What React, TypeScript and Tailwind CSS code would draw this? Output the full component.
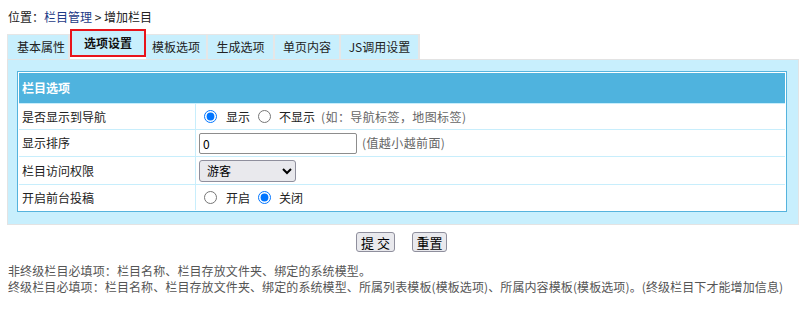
import { useState } from 'react';

const tabs = [
    { label: '基本属性', w: 'w-[63px] pl-[6px]' },
    { label: '选项设置', w: 'w-[76px]' },
    { label: '模板选项', w: 'w-[62px]' },
    { label: '生成选项', w: 'w-[67px]' },
    { label: '单页内容', w: 'w-[66px]' },
    { label: 'JS调用设置', w: 'w-[79px]' },
];

const Row = ({ label, children, h }: { label: string; children: React.ReactNode; h: string }) => (
    <div className={`flex ${h} border-t border-[#c8eefc]`}>
        <div className="w-[177px] shrink-0 flex items-center pl-[3px] border-r border-[#c8eefc]">{label}</div>
        <div className="flex-1 flex items-center pl-[3px]">{children}</div>
    </div>
);

export default function App() {
    const [active] = useState(1);
    const [showNav, setShowNav] = useState(true);
    const [allowPost, setAllowPost] = useState(false);
    const [order, setOrder] = useState('0');

    return (
        <div
            className="w-[801px] h-[324px] bg-white text-[12px] leading-[16px] text-[#222] overflow-hidden"
            style={{ fontFamily: '"Noto Sans CJK SC", "Noto Sans", sans-serif' }}
        >
            {/* 位置 */}
            <div className="pl-[8px] pt-[9px] h-[29px]">
                位置：<span className="text-[#1d3a86]">栏目管理</span> &gt; 增加栏目
            </div>

            {/* Tabs */}
            <div className="flex items-end pl-[7px] h-[30px]">
                {tabs.map((t, i) =>
                    i === active ? (
                        <div
                            key={t.label}
                            className={`${t.w} h-[28px] mb-[2px] flex items-center justify-center bg-[#c8effd] border-2 border-[#e8141b] font-bold text-[#111]`}
                        >
                            {t.label}
                        </div>
                    ) : (
                        <div
                            key={t.label}
                            className={`${t.w} h-[25px] flex items-center justify-center bg-[#c8effd] border-r-2 border-r-[#e6e6e6] border-t border-t-[#e6e6e6] ${i === 0 ? 'border-l border-l-[#e6e6e6]' : ''}`}
                        >
                            {t.label}
                        </div>
                    )
                )}
            </div>

            {/* Panel */}
            <div className="ml-[7px] mr-[2px] bg-[#c8effd] border border-[#e3e3e3] pt-[11px] pb-[12px] pl-[9px] pr-[11px]">
                <div className="border border-[#55b3dd] p-px bg-white">
                    <div className="h-[30px] bg-[#4fb3de] text-white font-bold flex items-center pl-[3px]">栏目选项</div>
                    <Row label="是否显示到导航" h="h-[26px]">
                        <label className="flex items-center">
                            <input
                                type="radio"
                                name="nav"
                                checked={showNav}
                                onChange={() => setShowNav(true)}
                                className="ml-[5px] mr-[9px]"
                            />
                            显示
                        </label>
                        <label className="flex items-center">
                            <input
                                type="radio"
                                name="nav"
                                checked={!showNav}
                                onChange={() => setShowNav(false)}
                                className="ml-[8px] mr-[8px]"
                            />
                            不显示
                        </label>
                        <span className="ml-[6px] text-[#666] tracking-[0.4px]">(如：导航标签，地图标签)</span>
                    </Row>
                    <Row label="显示排序" h="h-[27px]">
                        <input
                            type="text"
                            value={order}
                            onChange={(e) => setOrder(e.target.value)}
                            className="w-[158px] h-[21px] border border-[#8d8d8d] rounded-[2px] px-[3px] text-[12px] text-black"
                        />
                        <span className="ml-[5px] text-[#666] tracking-[0.4px]">(值越小越前面)</span>
                    </Row>
                    <Row label="栏目访问权限" h="h-[28px]">
                        <select className="w-[97px] h-[22px] border border-[#8f8f9d] rounded-[3px] bg-[#e9e9ed] pl-[3px] text-[12px] text-black">
                            <option>游客</option>
                            <option>会员</option>
                        </select>
                    </Row>
                    <Row label="开启前台投稿" h="h-[26px]">
                        <label className="flex items-center">
                            <input
                                type="radio"
                                name="post"
                                checked={allowPost}
                                onChange={() => setAllowPost(true)}
                                className="ml-[5px] mr-[9px]"
                            />
                            开启
                        </label>
                        <label className="flex items-center">
                            <input
                                type="radio"
                                name="post"
                                checked={!allowPost}
                                onChange={() => setAllowPost(false)}
                                className="ml-[8px] mr-[8px]"
                            />
                            关闭
                        </label>
                    </Row>
                </div>
            </div>

            {/* Buttons */}
            <div className="flex justify-center gap-[17px] pt-[7px] pl-[2px]">
                <button className="w-[39px] h-[20px] bg-[#e9e9ed] border border-[#8f8f9d] rounded-[3px] text-[13px] text-black leading-none">提 交</button>
                <button className="w-[35px] h-[20px] bg-[#e9e9ed] border border-[#8f8f9d] rounded-[3px] text-[13px] text-black leading-none">重置</button>
            </div>

            {/* Notes */}
            <div className="pl-[8px] pt-[11px] text-[#555] tracking-[0.1px]">
                <p>非终级栏目必填项：栏目名称、栏目存放文件夹、绑定的系统模型。</p>
                <p>终级栏目必填项：栏目名称、栏目存放文件夹、绑定的系统模型、所属列表模板(模板选项)、所属内容模板(模板选项)。(终级栏目下才能增加信息)</p>
            </div>
        </div>
    );
}
